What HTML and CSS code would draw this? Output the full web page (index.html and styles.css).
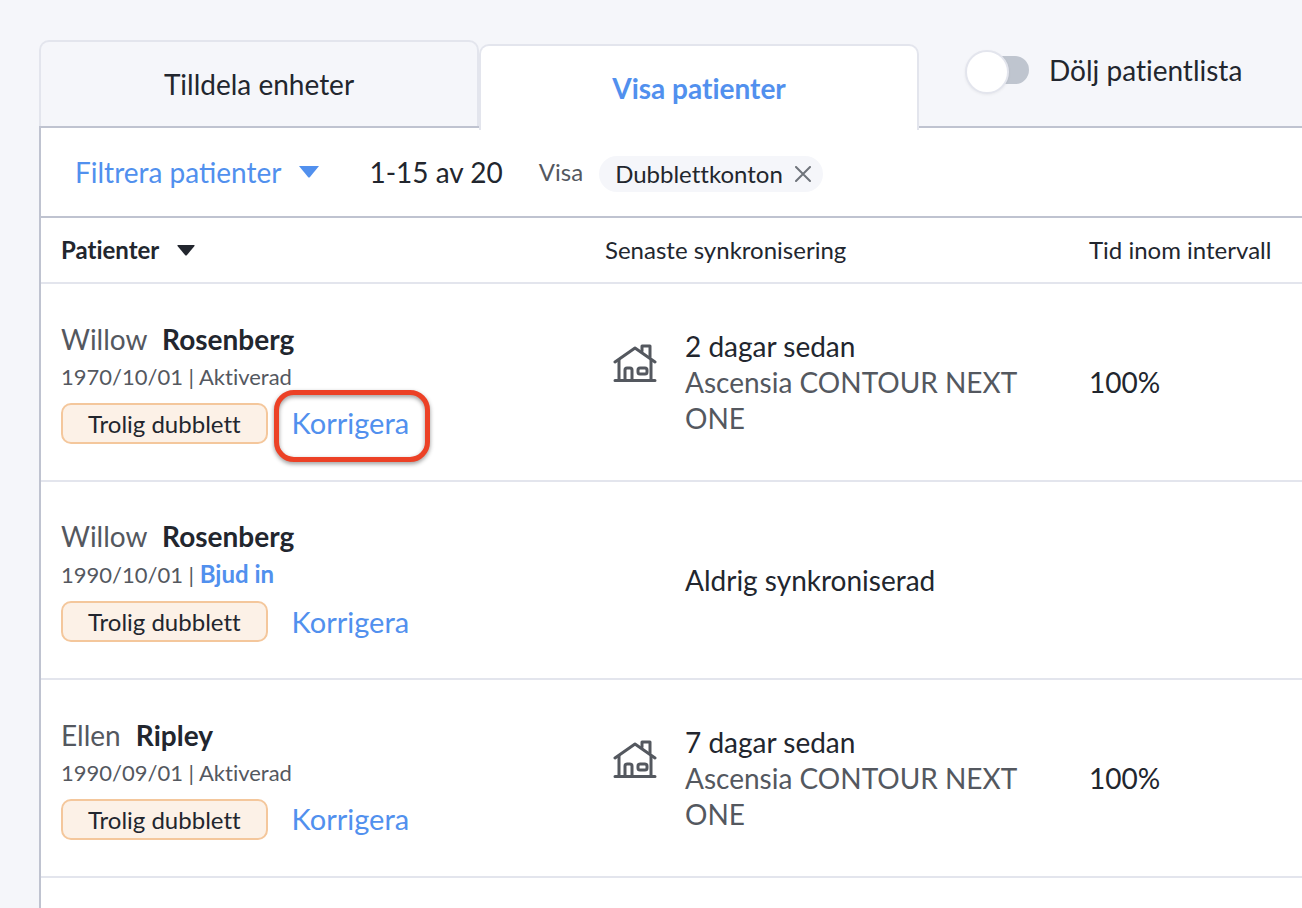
FILE: index.html
```html
<!DOCTYPE html>
<html lang="sv">
<head>
    <meta charset="UTF-8">
    <meta name="viewport" content="width=device-width, initial-scale=1.0">
    <title>Visa patienter</title>
    <link rel="stylesheet" href="styles.css">
</head>
<body>
    <svg width="0" height="0" class="sprite" aria-hidden="true">
        <symbol id="icon-house" viewBox="0 0 44 40">
            <g fill="none" stroke="#54585f" stroke-width="3" stroke-linecap="round" stroke-linejoin="round">
                <path d="M2 18 L22 4 L42 18"/>
                <path d="M6 16 V36 M38 16 V36 M2 36.500 H42"/>
                <path d="M29 7 V2 H37 V13"/>
                <path d="M12 36 V26 Q12 24 14 24 H17 Q19 24 19 26 V36"/>
                <rect x="25" y="24" width="9" height="6" rx="2"/>
            </g>
        </symbol>
    </svg>

    <header class="top-bar">
        <nav class="tabs">
            <button type="button" class="tab">Tilldela enheter</button>
            <button type="button" class="tab active">Visa patienter</button>
        </nav>
        <div class="toggle">
            <input type="checkbox" id="hide-list" class="switch">
            <label for="hide-list">Dölj patientlista</label>
        </div>
    </header>

    <main class="panel">
        <div class="toolbar">
            <button type="button" class="filter-button">
                Filtrera patienter
                <svg width="20" height="12" viewBox="0 0 20 12"><path d="M0 0 H20 L11 11 Q10 12 9 11 Z" fill="#5190ee"/></svg>
            </button>
            <span class="count">1-15 av 20</span>
            <span class="show-label">Visa</span>
            <span class="chip">
                Dubblettkonton
                <button type="button" class="chip-close" aria-label="Ta bort filter">
                    <svg width="16" height="16" viewBox="0 0 16 16"><path d="M1 1 L15 15 M15 1 L1 15" stroke="#6f747b" stroke-width="2" stroke-linecap="round"/></svg>
                </button>
            </span>
        </div>

        <table class="patients">
            <thead>
                <tr>
                    <th class="col-patient">
                        <button type="button" class="sort-button">
                            Patienter
                            <svg width="18" height="11" viewBox="0 0 18 11"><path d="M1 0 H17 Q18 0 17.500 1 L10 10 Q9 11 8 10 L0.500 1 Q0 0 1 0 Z" fill="#22262e"/></svg>
                        </button>
                    </th>
                    <th class="col-sync">Senaste synkronisering</th>
                    <th>Tid inom intervall</th>
                </tr>
            </thead>
            <tbody>
                <tr>
                    <td>
                        <div class="name">Willow <strong>Rosenberg</strong></div>
                        <div class="details">1970/10/01 | Aktiverad</div>
                        <div class="actions">
                            <span class="tag">Trolig dubblett</span>
                            <a href="#" class="fix-link highlighted">Korrigera</a>
                        </div>
                    </td>
                    <td>
                        <div class="sync">
                            <svg class="house"><use href="#icon-house"/></svg>
                            <div class="sync-text">2 dagar sedan <span class="device">Ascensia CONTOUR NEXT ONE</span></div>
                        </div>
                    </td>
                    <td>100%</td>
                </tr>
                <tr>
                    <td>
                        <div class="name">Willow <strong>Rosenberg</strong></div>
                        <div class="details">1990/10/01 | <a href="#" class="invite">Bjud in</a></div>
                        <div class="actions">
                            <span class="tag">Trolig dubblett</span>
                            <a href="#" class="fix-link">Korrigera</a>
                        </div>
                    </td>
                    <td>
                        <div class="sync never">
                            <div class="sync-text">Aldrig synkroniserad</div>
                        </div>
                    </td>
                    <td></td>
                </tr>
                <tr>
                    <td>
                        <div class="name">Ellen <strong>Ripley</strong></div>
                        <div class="details">1990/09/01 | Aktiverad</div>
                        <div class="actions">
                            <span class="tag">Trolig dubblett</span>
                            <a href="#" class="fix-link">Korrigera</a>
                        </div>
                    </td>
                    <td>
                        <div class="sync">
                            <svg class="house"><use href="#icon-house"/></svg>
                            <div class="sync-text">7 dagar sedan <span class="device">Ascensia CONTOUR NEXT ONE</span></div>
                        </div>
                    </td>
                    <td>100%</td>
                </tr>
            </tbody>
        </table>
    </main>
</body>
</html>
```
FILE: styles.css
```css
*, *::before, *::after {
    box-sizing: border-box;
}
body {
    font-family: Lato, sans-serif;
    font-size: 28px;
    line-height: 36px;
    font-variant-ligatures: none;
    color: #22262e;
    background-color: #f5f6fa;
    margin: 0;
    padding: 40px 0 0 39px;
    min-height: 100vh;
    display: flex;
    flex-direction: column;
}
button {
    font: inherit;
    font-variant-ligatures: inherit;
    color: inherit;
    background: none;
    border: none;
    padding: 0;
    cursor: pointer;
}
a {
    color: #5190ee;
    text-decoration: none;
}
.sprite {
    position: absolute;
}

/* Tabs */
.top-bar {
    display: flex;
}
.tabs {
    display: flex;
    flex: 0 1 880px;
}
.tab {
    flex: 1;
    padding: 24px 0;
    border: 2px solid #e3e5ed;
    border-bottom: none;
    border-radius: 10px 10px 0 0;
}
.tab.active {
    position: relative;
    z-index: 1;
    margin: 4px 0 -4px;
    background-color: white;
    color: #5190ee;
    font-weight: bold;
}
.toggle {
    display: flex;
    align-items: center;
    gap: 20px;
    margin-left: 50px;
    padding-bottom: 26px;
}
.switch {
    appearance: none;
    position: relative;
    width: 60px;
    height: 28px;
    margin: 0;
    border-radius: 14px;
    background-color: #bfc5cf;
}
.switch::before {
    content: "";
    position: absolute;
    top: -6px;
    left: -4px;
    width: 44px;
    height: 44px;
    border: 2px solid #e3e5ed;
    border-radius: 50%;
    background-color: white;
    box-shadow: 0 1px 3px rgba(0, 0, 0, 0.06);
}
.switch:checked::before {
    left: 20px;
}

/* Panel */
.panel {
    flex: 1;
    background-color: white;
    border-top: 2px solid #bfc3d0;
    border-left: 2px solid #bfc3d0;
}
.toolbar {
    display: flex;
    align-items: center;
    height: 90px;
    padding-left: 34px;
    border-bottom: 2px solid #bfc3d0;
}
.filter-button {
    display: flex;
    align-items: center;
    gap: 18px;
    color: #5190ee;
    font-variant-ligatures: normal;
}
.count {
    margin-left: 50px;
}
.show-label {
    margin-left: 36px;
    font-size: 24px;
    color: #54585f;
}
.chip {
    display: flex;
    align-items: center;
    gap: 12px;
    margin: 4px 0 0 16px;
    padding: 0 12px 0 16px;
    font-size: 24px;
    background-color: #f5f6fa;
    border-radius: 18px;
}
.chip-close {
    display: flex;
}

/* Table */
.patients {
    width: 100%;
    table-layout: fixed;
    border-collapse: separate;
    border-spacing: 0;
}
.col-patient {
    width: 544px;
}
.col-sync {
    width: 484px;
}
th, td {
    padding: 0 20px;
    text-align: left;
    border-bottom: 2px solid #e3e5ed;
}
th {
    height: 66px;
    font-size: 24px;
    font-weight: normal;
}
td {
    height: 198px;
}
.sort-button {
    display: flex;
    align-items: center;
    gap: 18px;
    font-weight: bold;
}
.name {
    color: #54585f;
}
.name strong {
    margin-left: 8px;
    color: #22262e;
}
.details {
    font-size: 22px;
    line-height: 40px;
    color: #54585f;
}
.invite {
    font-size: 24px;
    font-weight: bold;
}
.actions {
    display: flex;
    align-items: center;
    gap: 24px;
    margin-top: 6px;
}
.tag {
    padding: 0 25px;
    font-size: 24px;
    line-height: 37px;
    background-color: #fcf1e7;
    border: 2px solid #f4c79c;
    border-radius: 10px;
}
.fix-link {
    font-size: 29px;
}
.highlighted {
    position: relative;
}
.highlighted::after {
    content: "";
    position: absolute;
    top: -15px;
    right: -21px;
    bottom: -21px;
    left: -18px;
    border: 5px solid #ec4126;
    border-radius: 20px;
    filter: drop-shadow(0 2px 2px rgba(0, 0, 0, 0.4));
    pointer-events: none;
}
.sync {
    display: flex;
    align-items: flex-start;
    gap: 28px;
    padding-left: 8px;
}
.sync.never {
    padding-left: 80px;
}
.house {
    flex: none;
    width: 44px;
    height: 40px;
    margin-top: 16px;
}
.device {
    display: block;
    color: #54585f;
}
```
